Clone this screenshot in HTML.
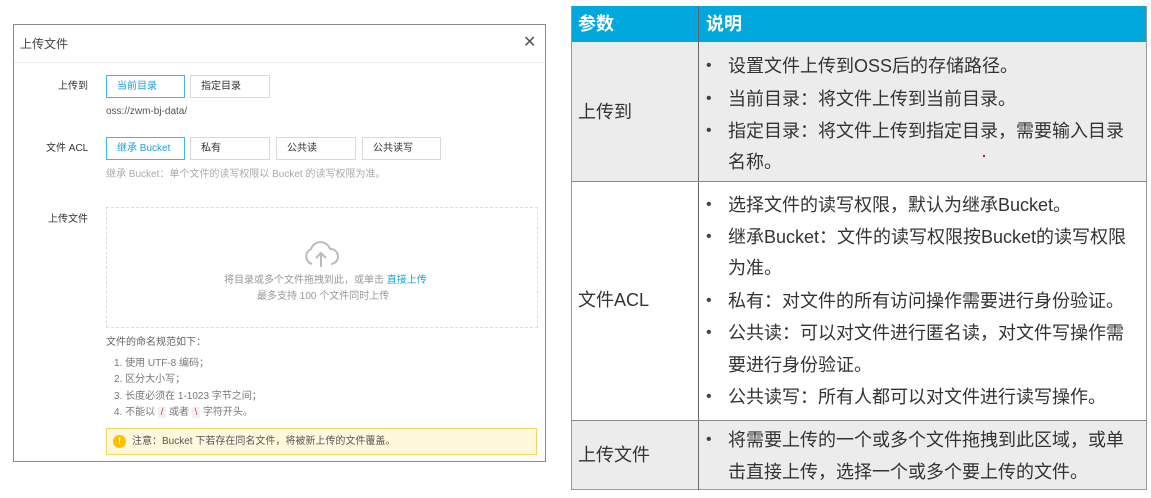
<!DOCTYPE html>
<html><head><meta charset="utf-8"><style>
body{margin:0;width:1151px;height:498px;background:#fff;position:relative;overflow:hidden;font-family:"Liberation Sans","Noto Sans CJK SC",sans-serif}
.a{position:absolute;white-space:nowrap}
.s{font-size:10px;color:#333;line-height:12px}
.btn{position:absolute;height:23px;border:1px solid #d9d9d9;font-size:10px;line-height:22px;padding-left:10px;box-sizing:border-box;color:#333;background:#fff}
.on{border-color:#3bb8e8;color:#1aa3dd}
.t{position:absolute;font-size:18px;line-height:24px;color:#333;white-space:nowrap}
.dot{position:absolute;font-size:16px;line-height:24px;color:#444}
</style></head><body>
<div class="a" style="left:13px;top:24px;width:531px;height:436px;border:1px solid #8a8a8a"></div>
<div class="a" style="left:14px;top:62px;width:531px;height:1px;background:#eee"></div>
<div class="a" style="left:20px;top:35px;font-size:12px;color:#444">上传文件</div>
<div class="a" style="left:523px;top:34px;font-size:16px;color:#555;line-height:18px">✕</div>
<div class="a s" style="left:58px;top:81px">上传到</div>
<div class="btn on" style="left:106px;top:75px;width:79px">当前目录</div>
<div class="btn" style="left:190px;top:75px;width:80px">指定目录</div>
<div class="a s" style="left:106px;top:106px;color:#555">oss://zwm-bj-data/</div>
<div class="a s" style="left:46px;top:143px">文件 ACL</div>
<div class="btn on" style="left:106px;top:137px;width:79px">继承 Bucket</div>
<div class="btn" style="left:190px;top:137px;width:80px">私有</div>
<div class="btn" style="left:276px;top:137px;width:80px">公共读</div>
<div class="btn" style="left:362px;top:137px;width:79px">公共读写</div>
<div class="a s" style="left:106px;top:169px;color:#aaa">继承 Bucket：单个文件的读写权限以 Bucket 的读写权限为准。</div>
<div class="a s" style="left:48px;top:214px">上传文件</div>
<div class="a" style="left:106px;top:207px;width:430px;height:119px;border:1px dashed #ddd"></div>
<svg class="a" style="left:303px;top:240px" width="36" height="28" viewBox="0 0 36 28"><path d="M9 24 A8 8 0 0 1 8 9 A10 10 0 0 1 27 9 A7.5 7.5 0 0 1 28 24" fill="none" stroke="#bbb" stroke-width="2"/><path d="M18 27 V13 M13 18 L18 13 L23 18" fill="none" stroke="#bbb" stroke-width="2"/></svg>
<div class="a s" style="left:224px;top:275px;color:#999">将目录或多个文件拖拽到此，或单击 <span style="color:#1aa3dd">直接上传</span></div>
<div class="a s" style="left:257px;top:291px;color:#999">最多支持 100 个文件同时上传</div>
<div class="a s" style="left:106px;top:337px;color:#666">文件的命名规范如下：</div>
<div class="a s" style="left:114px;top:358px;color:#777">1. 使用 UTF-8 编码；</div>
<div class="a s" style="left:114px;top:374px;color:#777">2. 区分大小写；</div>
<div class="a s" style="left:114px;top:391px;color:#777">3. 长度必须在 1-1023 字节之间；</div>
<div class="a s" style="left:114px;top:407px;color:#777">4. 不能以 <span style="background:#f5f0f0;color:#c44">&nbsp;/&nbsp;</span> 或者 <span style="background:#f5f0f0;color:#c44">&nbsp;\&nbsp;</span> 字符开头。</div>
<div class="a" style="left:106px;top:428px;width:431px;height:27px;background:#fff8dc;border:1px solid #f5d65a;box-sizing:border-box"></div>
<div class="a" style="left:113px;top:435px;width:13px;height:13px;border-radius:7px;background:#fbc000;color:#fff;font-size:9px;text-align:center;line-height:13px;font-weight:bold">!</div>
<div class="a s" style="left:132px;top:436px;color:#555">注意：Bucket 下若存在同名文件，将被新上传的文件覆盖。</div>

<div class="a" style="left:571px;top:6px;width:575px;height:36px;background:#00a8dd"></div>
<div class="a" style="left:571px;top:42px;width:575px;height:139px;background:#ececec"></div>
<div class="a" style="left:571px;top:420px;width:575px;height:70px;background:#ececec"></div>
<div class="a" style="left:571px;top:6px;width:574px;height:483px;border:1px solid #999;border-top:none"></div>
<div class="a" style="left:698px;top:6px;width:1px;height:484px;background:#666"></div>
<div class="a" style="left:571px;top:181px;width:575px;height:1px;background:#888"></div>
<div class="a" style="left:571px;top:420px;width:575px;height:1px;background:#888"></div>
<div class="t" style="left:578px;top:12px;color:#fff;font-weight:bold">参数</div>
<div class="t" style="left:706px;top:12px;color:#fff;font-weight:bold">说明</div>
<div class="t" style="left:578px;top:100px">上传到</div>
<div class="t" style="left:578px;top:288px">文件ACL</div>
<div class="t" style="left:578px;top:443px">上传文件</div>
<div class="dot" style="left:706px;top:54px">•</div><div class="t" style="left:728px;top:54px">设置文件上传到OSS后的存储路径。</div>
<div class="dot" style="left:706px;top:87px">•</div><div class="t" style="left:728px;top:87px">当前目录：将文件上传到当前目录。</div>
<div class="dot" style="left:706px;top:119px">•</div><div class="t" style="left:728px;top:119px">指定目录：将文件上传到指定目录，需要输入目录</div>
<div class="t" style="left:728px;top:150px">名称。</div>
<div class="dot" style="left:706px;top:193px">•</div><div class="t" style="left:728px;top:193px">选择文件的读写权限，默认为继承Bucket。</div>
<div class="dot" style="left:706px;top:225px">•</div><div class="t" style="left:728px;top:225px">继承Bucket：文件的读写权限按Bucket的读写权限</div>
<div class="t" style="left:728px;top:256px">为准。</div>
<div class="dot" style="left:706px;top:289px">•</div><div class="t" style="left:728px;top:289px">私有：对文件的所有访问操作需要进行身份验证。</div>
<div class="dot" style="left:706px;top:321px">•</div><div class="t" style="left:728px;top:321px">公共读：可以对文件进行匿名读，对文件写操作需</div>
<div class="t" style="left:728px;top:353px">要进行身份验证。</div>
<div class="dot" style="left:706px;top:385px">•</div><div class="t" style="left:728px;top:385px">公共读写：所有人都可以对文件进行读写操作。</div>
<div class="dot" style="left:706px;top:428px">•</div><div class="t" style="left:728px;top:428px">将需要上传的一个或多个文件拖拽到此区域，或单</div>
<div class="t" style="left:728px;top:460px">击直接上传，选择一个或多个要上传的文件。</div>
<div class="a" style="left:983px;top:155px;width:2px;height:2px;background:#e00"></div>
</body></html>
